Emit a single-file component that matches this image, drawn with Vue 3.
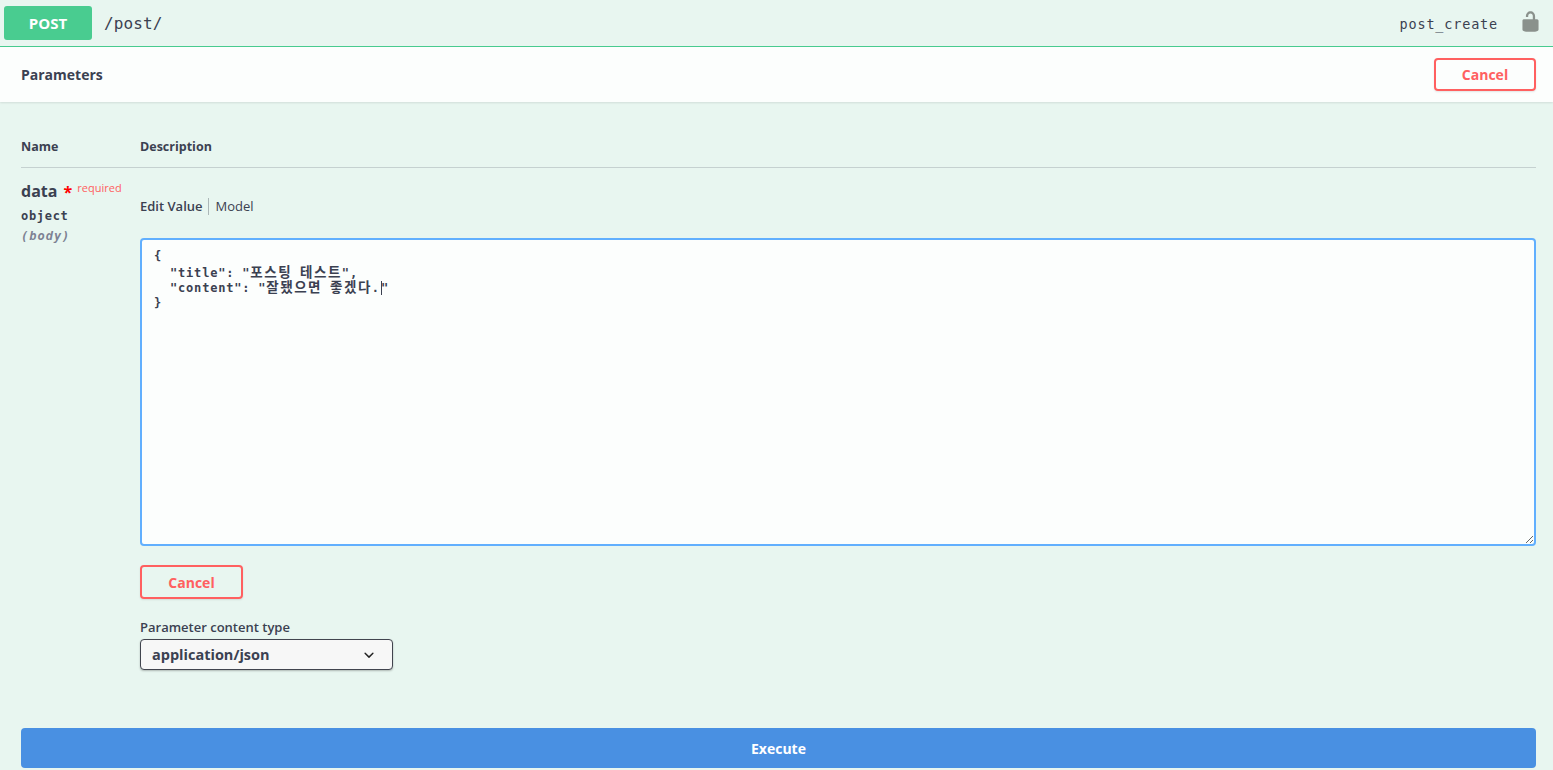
<template>
  <div class="block">
    <div class="summary">
      <div class="method">POST</div>
      <div class="path">/post<span class="thin"> </span>/</div>
      <div class="opid">post_create</div>
      <svg class="lock" width="23" height="23" viewBox="0 0 20 20"><path fill="#8a918c" d="M15.8 8H14V5.6C14 2.7 12.1 1 10 1S6 2.7 6 5.6V6h2v-.801C8 3.754 8.797 3 10 3c1.203 0 2 .754 2 2.199V8H4c-.553 0-1 .646-1 1.199V17c0 .549.428 1.139.951 1.307l1.197.387C5.672 18.861 6.55 19 7.1 19h5.8c.549 0 1.428-.139 1.951-.307l1.196-.387c.524-.167.953-.757.953-1.306V9.199C17 8.646 16.352 8 15.8 8z"/></svg>
    </div>
    <div class="section-head">
      <h4>Parameters</h4>
      <button class="cancel">Cancel</button>
    </div>
    <div class="params">
      <div class="cols"><div class="col-name">Name</div><div>Description</div></div>
      <div class="row">
        <div class="name-cell">
          <div class="pname">data <span class="star">*</span><span class="req">required</span></div>
          <div class="ptype">object</div>
          <div class="pin">(body)</div>
        </div>
        <div class="desc-cell">
          <div class="tabs"><span class="active">Edit Value</span><span class="model">Model</span></div>
          <div class="editor" contenteditable="true" spellcheck="false">
            <div v-for="(line, i) in lines" :key="i" class="line"><span v-for="(seg, j) in line" :key="j" :class="seg.c">{{ seg.t }}</span></div>
          </div>
          <button class="cancel lower">Cancel</button>
          <label class="ctype">Parameter content type</label>
          <div class="select">
            <span>application/json</span>
            <svg width="20" height="20" viewBox="0 0 20 20"><path fill="#222" d="M13.418 7.859a.695.695 0 0 1 .978 0 .68.68 0 0 1 0 .969l-3.908 3.83a.697.697 0 0 1-.979 0l-3.908-3.83a.68.68 0 0 1 0-.969.695.695 0 0 1 .978 0L10 11z"/></svg>
          </div>
        </div>
      </div>
    </div>
    <div class="exec-wrap"><button class="execute">Execute</button></div>
  </div>
</template>

<script setup>
const lines = [
  [{ t: '{' }],
  [
    { t: '  "title": "' },
    { t: '포스팅', c: 'ko' },
    { t: ' ' },
    { t: '테스트', c: 'ko' },
    { t: '",' }
  ],
  [
    { t: '  "content": "' },
    { t: '잘됐으면', c: 'ko' },
    { t: ' ' },
    { t: '좋겠다', c: 'ko' },
    { t: '.' },
    { t: '', c: 'caret' },
    { t: '"' }
  ],
  [{ t: '}' }]
]
</script>

<style>
html, body { margin: 0; background: #e8f6f0; overflow: hidden; }
</style>

<style scoped>
.block {
  height: 770px;
  overflow: hidden;
  background: #e8f6f0;
  color: #3b4151;
  font-family: "Open Sans", "Noto Sans", sans-serif;
}
.summary {
  display: flex;
  align-items: center;
  height: 46px;
  padding: 0 11px 0 4px;
  border-bottom: 1px solid #49cc90;
}
.method {
  width: 88px;
  height: 34px;
  line-height: 35px;
  text-align: center;
  background: #49cc90;
  color: #fff;
  font-size: 15px;
  font-weight: 700;
  border-radius: 3px;
}
.path {
  margin-left: 12px;
  font-family: "DejaVu Sans Mono", monospace;
  font-size: 16px;
  color: #3b4151;
  flex: 1;
  letter-spacing: .1px;
}
.thin { font-size: 4px; }
.opid {
  font-family: "DejaVu Sans Mono", monospace;
  font-size: 13.5px;
  color: #3b4151;
  letter-spacing: .82px;
  margin-top: 1px;
}
.lock { margin: -3px 0 0 21px; }
.section-head {
  display: flex;
  align-items: center;
  justify-content: space-between;
  height: 55px;
  box-sizing: border-box;
  padding: 0 17px 0 21px;
  background: rgba(255, 255, 255, .85);
  box-shadow: 0 1px 2px rgba(0, 0, 0, .1);
}
h4 {
  margin: 0;
  font-size: 14px;
  font-weight: 700;
  color: #3b4151;
}
.cancel {
  width: 102px;
  height: 33px;
  padding: 0;
  font: 700 14px "Open Sans", sans-serif;
  color: #ff6060;
  background: transparent;
  border: 2px solid #ff6060;
  border-radius: 4px;
  box-shadow: 0 1px 2px rgba(0, 0, 0, .1);
}
.params { padding: 35px 17px 0 21px; }
.cols {
  display: flex;
  height: 31px;
  align-items: flex-start;
  box-sizing: border-box;
  font-size: 12.5px;
  font-weight: 700;
  line-height: 19px;
  border-bottom: 1px solid rgba(59, 65, 81, .2);
}
.col-name, .name-cell { width: 119px; flex: none; }
.row { display: flex; }
.name-cell { padding-top: 11px; }
.pname {
  font-size: 16px;
  font-weight: 700;
  line-height: 24px;
  white-space: nowrap;
}
.star { color: #f00; font-size: 16px; position: relative; top: 1px; margin-left: 2px; }
.req {
  color: #ff6060;
  font-size: 11px;
  font-weight: 400;
  position: relative;
  top: -5px;
  margin-left: 5px;
}
.ptype {
  font-family: "DejaVu Sans Mono", monospace;
  font-size: 12px;
  font-weight: 700;
  line-height: 14px;
  margin-top: 4px;
  letter-spacing: .7px;
}
.pin {
  font-family: "DejaVu Sans Mono", monospace;
  font-size: 12px;
  font-style: italic;
  font-weight: 600;
  line-height: 14px;
  margin-top: 6px;
  color: #7d8293;
  letter-spacing: 1px;
}
.desc-cell { flex: 1; min-width: 0; }
.tabs {
  display: flex;
  align-items: center;
  height: 17px;
  margin-top: 30px;
  font-size: 13px;
  line-height: 17px;
}
.active { font-weight: 600; padding-right: 5px; border-right: 1px solid rgba(59, 65, 81, .35); }
.model { padding-left: 7px; }
.editor {
  display: block;
  height: 308px;
  margin-top: 23px;
  padding: 9px 12px;
  box-sizing: border-box;
  font: 700 12px/15.6px "DejaVu Sans Mono", "Noto Sans CJK KR", monospace;
  letter-spacing: .8px;
  color: #3b4151;
  background: rgba(255, 255, 255, .85);
  border: 2px solid #61affe;
  border-radius: 4px;
  outline: none;
  overflow: auto;
  resize: vertical;
}
.line { height: 15.6px; white-space: pre; }
.ko { font-size: 13.5px; letter-spacing: 1.5px; line-height: 15px; }
.caret {
  display: inline-block;
  width: 1px;
  height: 14px;
  margin: 0 -1px 0 1px;
  vertical-align: -3px;
  background: #3b4151;
}
.lower { display: block; width: 103px; height: 34px; margin-top: 19px; }
.ctype {
  display: block;
  margin-top: 20px;
  font-size: 13px;
  font-weight: 600;
  line-height: 16px;
}
.select {
  display: flex;
  align-items: center;
  justify-content: space-between;
  width: 253px;
  height: 31px;
  margin-top: 4px;
  padding: 0 13px 0 11px;
  box-sizing: border-box;
  background: #f7f7f7;
  border: 1px solid #41444e;
  border-radius: 4px;
  box-shadow: 0 1px 2px rgba(0, 0, 0, .25);
  font-size: 14.5px;
  font-weight: 700;
}
.exec-wrap { padding: 58px 17px 0 21px; }
.execute {
  display: block;
  width: 100%;
  height: 40px;
  padding: 0;
  font: 700 14px "Open Sans", sans-serif;
  color: #fff;
  background: #4990e2;
  border: 0;
  border-radius: 4px;
}
</style>
